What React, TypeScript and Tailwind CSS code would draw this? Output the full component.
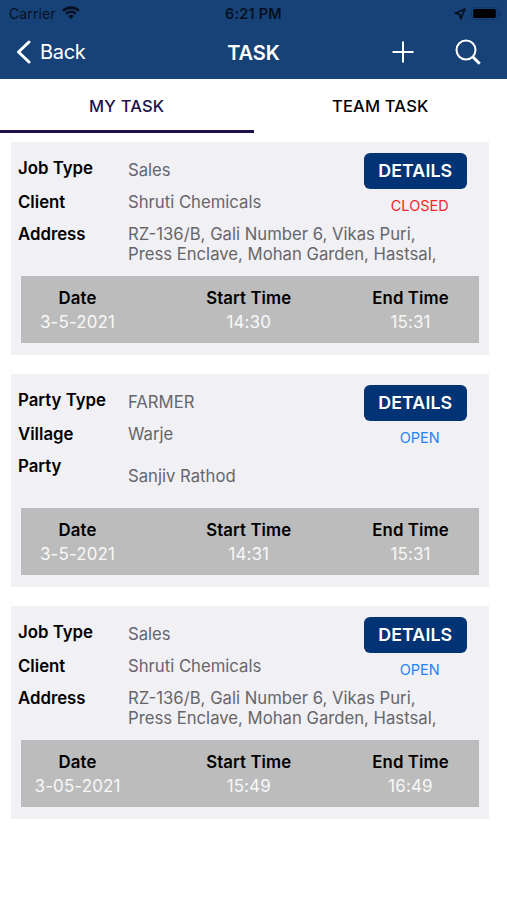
type Task = {
  id: number;
  fields: { label: string; value: string }[];
  status: "OPEN" | "CLOSED";
  date: string;
  start: string;
  end: string;
};

const ADDRESS = "RZ-136/B, Gali Number 6, Vikas Puri,\nPress Enclave, Mohan Garden, Hastsal,";

const tasks: Task[] = [
  {
    id: 1,
    fields: [
      { label: "Job Type", value: "Sales" },
      { label: "Client", value: "Shruti Chemicals" },
      { label: "Address", value: ADDRESS },
    ],
    status: "CLOSED",
    date: "3-5-2021",
    start: "14:30",
    end: "15:31",
  },
  {
    id: 2,
    fields: [
      { label: "Party Type", value: "FARMER" },
      { label: "Village", value: "Warje" },
      { label: "Party", value: "Sanjiv Rathod" },
    ],
    status: "OPEN",
    date: "3-5-2021",
    start: "14:31",
    end: "15:31",
  },
  {
    id: 3,
    fields: [
      { label: "Job Type", value: "Sales" },
      { label: "Client", value: "Shruti Chemicals" },
      { label: "Address", value: ADDRESS },
    ],
    status: "OPEN",
    date: "3-05-2021",
    start: "15:49",
    end: "16:49",
  },
];

export default function App() {
  return (
    <div className="h-[900px] w-[507px] overflow-hidden bg-white font-['Inter',sans-serif] text-black">
      <header className="h-[79px] bg-[#174278]">
        <StatusBar />
        <NavBar />
      </header>
      <Tabs />
      <main className="flex flex-col gap-[18.6px] pt-[8.5px] pl-[11px]">
        {tasks.map((t) => (
          <TaskCard key={t.id} task={t} />
        ))}
      </main>
    </div>
  );
}

function StatusBar() {
  return (
    <div className="grid h-[27px] grid-cols-3 items-center px-[6px] text-[#06101f]">
      <div className="flex items-center gap-[6px] pl-[3px]">
        <span className="text-[14px] tracking-[0.1px]">Carrier</span>
        <svg width="18" height="14" viewBox="0 0 18 14" fill="currentColor" className="-mt-px">
          <path d="M9 0.3C5.6 0.3 2.5 1.6 0.2 3.8L2 5.7C3.8 3.9 6.3 2.9 9 2.9s5.2 1 7 2.8l1.8-1.9C15.5 1.6 12.4 0.3 9 0.3Z" />
          <path d="M9 4.6c-2.2 0-4.2.9-5.7 2.3L5 8.7C6.1 7.7 7.5 7.1 9 7.1s2.9.6 4 1.6l1.7-1.8C13.2 5.5 11.2 4.6 9 4.6Z" />
          <path d="M9 8.8c-1.1 0-2 .4-2.8 1.1L9 13.2l2.8-3.3C11 9.2 10.1 8.8 9 8.8Z" />
        </svg>
      </div>
      <span className="text-center text-[14.5px] font-semibold tracking-[0.2px] whitespace-nowrap">6:21 PM</span>
      <div className="flex items-center justify-end gap-[5px]">
        <svg width="12" height="12" viewBox="0 0 12 12" fill="none" stroke="currentColor" strokeWidth="1.7" strokeLinejoin="round">
          <path d="M10.9 1.1 1.2 5.2l4.5 1.1 1.1 4.5Z" />
        </svg>
        <svg width="30" height="13" viewBox="0 0 30 13">
          <rect x="0.5" y="0.5" width="26" height="12" rx="3.5" fill="none" stroke="#12366a" />
          <rect x="2.2" y="2" width="22.6" height="9" rx="1.8" fill="#000" />
          <path d="M28 4.5v4c1-.3 1.5-1 1.5-2s-.5-1.7-1.5-2Z" fill="#102f59" />
        </svg>
      </div>
    </div>
  );
}

function NavBar() {
  return (
    <nav className="grid h-[50px] grid-cols-3 items-center text-white">
      <button className="flex items-center gap-[9px] pl-[16px]">
        <svg width="15" height="24" viewBox="0 0 15 24" fill="none" stroke="currentColor" strokeWidth="3" strokeLinecap="round" strokeLinejoin="round">
          <path d="M13 2 2.5 12 13 22" />
        </svg>
        <span className="text-[20px] tracking-[-0.3px]">Back</span>
      </button>
      <h1 className="pt-px text-center text-[20px] font-semibold tracking-[-0.1px]">TASK</h1>
      <div className="flex items-center justify-end gap-[41px] pr-[26px]">
        <svg width="22" height="22" viewBox="0 0 22 22" stroke="currentColor" strokeWidth="2">
          <path d="M11 0.5v21M0.5 11h21" />
        </svg>
        <svg width="26" height="26" viewBox="0 0 26 26" fill="none" stroke="currentColor">
          <circle cx="11" cy="11" r="9.5" strokeWidth="2" />
          <path d="m17.7 17.7 7 7" strokeWidth="3" />
        </svg>
      </div>
    </nav>
  );
}

function Tabs() {
  return (
    <div className="grid h-[54px] grid-cols-2 text-center text-[16.5px] font-medium tracking-[0.2px]">
      <button className="border-b-[3px] border-[#1f1147] pt-[4px] text-[#21104a]">MY TASK</button>
      <button className="border-b-[3px] border-transparent pt-[4px]">TEAM TASK</button>
    </div>
  );
}

function TaskCard({ task }: { task: Task }) {
  const [first, second, third] = task.fields;
  return (
    <section className="h-[213.5px] w-[477.5px] bg-[#f1f0f5]">
      <div className="flex h-[134.3px] pl-[7px]">
        <div className="flex w-[110px] flex-col pt-[16.5px] text-[16.8px] leading-[20px] font-semibold">
          <span>{first.label}</span>
          <span className="mt-[14px]">{second.label}</span>
          <span className="mt-[12px]">{third.label}</span>
        </div>
        <div className="flex flex-1 flex-col text-[16.7px] leading-[20.5px] text-[#66666a]">
          <div className="flex h-[82.3px] justify-between">
            <div className="flex flex-col gap-[11px] pt-[18.7px]">
              <span>{first.value}</span>
              <span>{second.value}</span>
            </div>
            <div className="mr-[22px] flex w-[102.5px] flex-col pt-[11px]">
              <button className="h-[36.5px] rounded-[6px] bg-[#023374] text-[17.8px] font-semibold tracking-[0.1px] text-white">
                DETAILS
              </button>
              <span
                className={
                  task.status === "OPEN"
                    ? "mt-[6.6px] pl-[9px] text-center text-[14.5px] text-[#1f83f5]"
                    : "mt-[6.6px] pl-[9px] text-center text-[14.5px] text-[#f5262c]"
                }
              >
                {task.status}
              </span>
            </div>
          </div>
          <div className="flex h-[41px] items-center whitespace-pre">{third.value}</div>
        </div>
      </div>
      <div className="mx-[9.5px] flex h-[67.2px] justify-between bg-[#bcbcbc] pt-[12px]">
        <Slot title="Date" value={task.date} className="w-[114px]" />
        <Slot title="Start Time" value={task.start} className="ml-[21px] w-[114px]" />
        <Slot title="End Time" value={task.end} className="w-[137px]" />
      </div>
    </section>
  );
}

function Slot({ title, value, className }: { title: string; value: string; className: string }) {
  return (
    <div className={`flex flex-col gap-[4px] text-center leading-[20px] ${className}`}>
      <span className="text-[16.8px] font-semibold tracking-[0.1px]">{title}</span>
      <span className="text-[17px] tracking-[0.1px] text-[#f8f8f8]">{value}</span>
    </div>
  );
}
